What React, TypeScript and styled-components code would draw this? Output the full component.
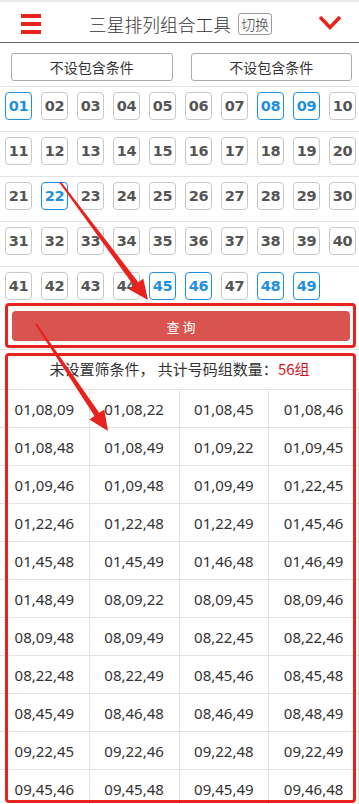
import styled, { createGlobalStyle } from "styled-components";

const RED = "#e8231e";
const BLUE = "#1f8fe3";
const picked = [1, 8, 9, 22, 45, 46, 48, 49];

const pad = (n: number) => String(n).padStart(2, "0");

// every 3-number group out of the picked numbers, in order
const combos: string[] = [];
for (let a = 0; a < picked.length; a++)
  for (let b = a + 1; b < picked.length; b++)
    for (let c = b + 1; c < picked.length; c++)
      combos.push([picked[a], picked[b], picked[c]].map(pad).join(","));

const rows: number[][] = [];
for (let r = 0; r < 5; r++) {
  const row: number[] = [];
  for (let i = 1; i <= 10; i++) {
    const n = r * 10 + i;
    if (n <= 49) row.push(n);
  }
  rows.push(row);
}

function arrowPoints(x1: number, y1: number, x2: number, y2: number) {
  const dx = x2 - x1;
  const dy = y2 - y1;
  const len = Math.hypot(dx, dy);
  const ux = dx / len;
  const uy = dy / len;
  const nx = -uy;
  const ny = ux;
  const bx = x2 - ux * 20;
  const by = y2 - uy * 20;
  const p = (x: number, y: number, w: number) => `${x + nx * w},${y + ny * w}`;
  return [
    p(x1, y1, 1),
    p(bx, by, 2.8),
    p(bx, by, 9),
    `${x2},${y2}`,
    p(bx, by, -9),
    p(bx, by, -2.8),
    p(x1, y1, -1),
  ].join(" ");
}

export default function App() {
  return (
    <>
      <GlobalStyle />
      <Page>
        <Header>
          <Burger>
            <span />
            <span />
            <span />
          </Burger>
          <TitleWrap>
            <Title>三星排列组合工具</Title>
            <SwitchTag>切换</SwitchTag>
          </TitleWrap>
          <Chevron width="24" height="16" viewBox="0 0 24 16">
            <polyline points="2,2 12,12.5 22,2" fill="none" stroke={RED} strokeWidth="3.6" />
          </Chevron>
        </Header>

        <ButtonRow>
          <OptionButton>不设包含条件</OptionButton>
          <OptionButton>不设包含条件</OptionButton>
        </ButtonRow>

        {rows.map((row, i) => (
          <NumberRow key={i} $last={i === rows.length - 1}>
            {row.map((n) => (
              <Ball key={n} $on={picked.includes(n)}>
                {pad(n)}
              </Ball>
            ))}
          </NumberRow>
        ))}

        <QueryBar>
          <QueryButton>查 询</QueryButton>
        </QueryBar>

        <Summary>
          未设置筛条件，{"\u00a0"}共计号码组数量：<Count>56组</Count>
        </Summary>

        <ResultGrid>
          {combos.map((c) => (
            <Cell key={c}>{c}</Cell>
          ))}
        </ResultGrid>

        <Frame $top={303} $height={45} />
        <Frame $top={353} $height={450} />
        <Arrows width="359" height="804" viewBox="0 0 359 804">
          <polygon points={arrowPoints(60, 182, 148, 300)} fill={RED} />
          <polygon points={arrowPoints(36, 324, 108, 431)} fill={RED} />
        </Arrows>
      </Page>
    </>
  );
}

const GlobalStyle = createGlobalStyle`
  html, body {
    margin: 0;
    padding: 0;
    background: #fff;
  }
  body {
    font-family: "Noto Sans CJK SC", "Noto Sans", sans-serif;
    color: #333;
  }
`;

const Page = styled.div`
  position: relative;
  width: 359px;
  height: 804px;
  overflow: hidden;
  background: #fff;
`;

const Header = styled.div`
  display: flex;
  align-items: center;
  height: 36px;
  padding-top: 4px;
  border-top: 2px solid #e8e8e8;
  border-bottom: 1px solid #666;
`;

const Burger = styled.div`
  display: flex;
  flex-direction: column;
  gap: 3.7px;
  margin-left: 21px;
  width: 20px;

  span {
    display: block;
    height: 4px;
    background: ${RED};
  }
`;

const TitleWrap = styled.div`
  flex: 1;
  display: flex;
  justify-content: center;
  align-items: center;
  gap: 7px;
  padding-left: 2px;
`;

const Title = styled.div`
  font-size: 17.8px;
  font-weight: 300;
  color: #333;
  line-height: 24px;
`;

const SwitchTag = styled.div`
  font-size: 14px;
  font-weight: 300;
  line-height: 20px;
  padding: 0 2px;
  border: 1px solid #999;
  border-radius: 3px;
  color: #333;
`;

const Chevron = styled.svg`
  margin-right: 17px;
  margin-bottom: 3px;
`;

const ButtonRow = styled.div`
  display: flex;
  gap: 18px;
  padding: 10px 7px 5px 11px;
  border-bottom: 1px solid #e2e2e2;
`;

const OptionButton = styled.div`
  flex: 1;
  height: 26px;
  border: 1px solid #aaa;
  border-radius: 3px;
  display: flex;
  align-items: center;
  justify-content: center;
  font-size: 14px;
  color: #333;
`;

const NumberRow = styled.div<{ $last?: boolean }>`
  display: flex;
  gap: 9px;
  padding: 5px 0 ${(p) => (p.$last ? 1 : 11)}px 5px;
  border-bottom: ${(p) => (p.$last ? "none" : "1px solid #e2e2e2")};
`;

const Ball = styled.div<{ $on?: boolean }>`
  box-sizing: border-box;
  width: 27px;
  height: 28px;
  border: 1px solid ${(p) => (p.$on ? BLUE : "#c8c8c8")};
  border-radius: 4px;
  display: flex;
  align-items: center;
  justify-content: center;
  font-family: "DejaVu Sans", sans-serif;
  font-weight: bold;
  font-size: 14.5px;
  letter-spacing: -0.3px;
  color: ${(p) => (p.$on ? BLUE : "#555")};
`;

const QueryBar = styled.div`
  padding: 10px 9px 8px 12px;
  border-bottom: 1px solid #e2e2e2;
`;

const QueryButton = styled.div`
  height: 30px;
  border-radius: 4px;
  background: #d9534f;
  color: #fff;
  font-size: 13px;
  display: flex;
  align-items: center;
  justify-content: center;
`;

const Summary = styled.div`
  height: 39px;
  line-height: 38px;
  text-align: center;
  font-size: 15px;
  color: #333;
  border-bottom: 1px solid #e2e2e2;
`;

const Count = styled.span`
  color: #d9121b;
`;

const ResultGrid = styled.div`
  display: grid;
  grid-template-columns: repeat(4, 1fr);
`;

const Cell = styled.div`
  height: 37px;
  display: flex;
  align-items: center;
  justify-content: center;
  font-family: "Noto Sans", sans-serif;
  font-size: 15px;
  color: #333;
  border-right: 1px solid #e2e2e2;
  border-bottom: 1px solid #e2e2e2;
`;

const Frame = styled.div<{ $top: number; $height: number }>`
  position: absolute;
  left: 5px;
  width: 345px;
  top: ${(p) => p.$top}px;
  height: ${(p) => p.$height - 6}px;
  border: 3px solid ${RED};
  border-radius: 4px;
  pointer-events: none;
`;

const Arrows = styled.svg`
  position: absolute;
  left: 0;
  top: 0;
  pointer-events: none;
`;
